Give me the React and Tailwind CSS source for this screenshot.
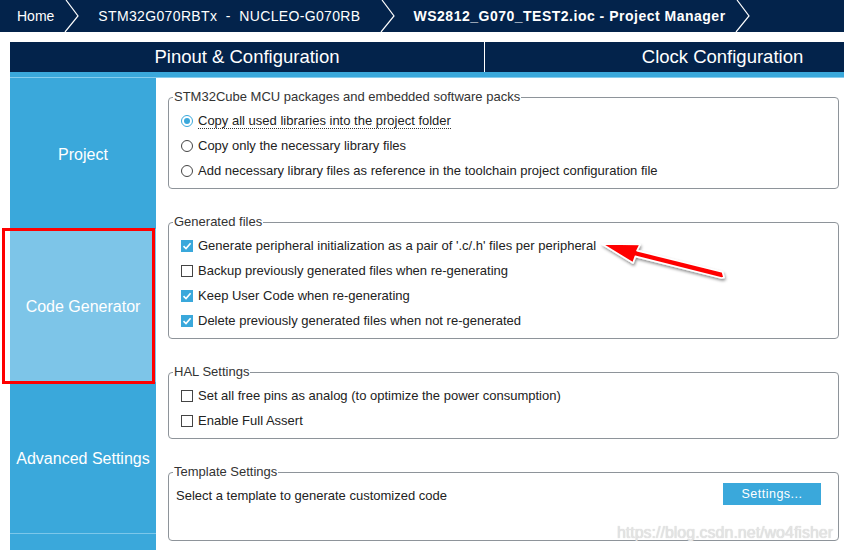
import React from 'react';

const Chevron = () => (
  <svg width="16" height="32" viewBox="0 0 16 32" className="shrink-0">
    <polyline points="2,0 14,16 1,32" fill="none" stroke="#ffffff" strokeWidth="1.2" />
  </svg>
);

const Radio = ({ on }) => (
  <svg width="12" height="12" viewBox="0 0 12 12" className="shrink-0">
    <circle cx="6" cy="6" r="5.5" fill="#fff" stroke={on ? '#3aa8db' : '#444'} strokeWidth="1" />
    {on && <circle cx="6" cy="6" r="3" fill="#3aa8db" />}
  </svg>
);

const Check = ({ on }) =>
  on ? (
    <svg width="12" height="12" viewBox="0 0 12 12" className="shrink-0">
      <rect x="0" y="0" width="12" height="12" fill="#3aa8db" />
      <polyline points="2.5,6.2 5,8.6 9.6,3.2" fill="none" stroke="#fff" strokeWidth="1.6" />
    </svg>
  ) : (
    <svg width="12" height="12" viewBox="0 0 12 12" className="shrink-0">
      <rect x="0.5" y="0.5" width="11" height="11" fill="#fff" stroke="#444" strokeWidth="1" />
    </svg>
  );

const Group = ({ title, className = '', children }) => (
  <fieldset className={`border border-[#8e949a] rounded-[4px] p-0 m-0 min-w-0 ${className}`}>
    <legend className="ml-[4px] px-[1px] text-[13px] leading-[16px] text-[#333]">{title}</legend>
    {children}
  </fieldset>
);

const Row = ({ icon, children }) => (
  <div className="h-[25px] flex items-center gap-[5px] pl-[12px] text-[13px] text-[#222]">
    {icon}
    {children}
  </div>
);

const App = () => {
  const sideItems = ['Project', 'Code Generator', 'Advanced Settings', ''];

  return (
    <div className="relative w-[844px] h-[550px] overflow-hidden bg-white font-['Liberation_Sans',Arial,sans-serif]">
      {/* breadcrumb */}
      <div className="h-8 bg-[#03234b] flex items-center text-white text-[14px] whitespace-nowrap">
        <span className="ml-[17px]">Home</span>
        <span className="ml-[10px]"><Chevron /></span>
        <span className="ml-[18px] tracking-[0.35px]">STM32G070RBTx&nbsp; - &nbsp;NUCLEO-G070RB</span>
        <span className="ml-[19px]"><Chevron /></span>
        <span className="ml-[18px] font-bold tracking-[0.5px]">WS2812_G070_TEST2.ioc - Project Manager</span>
        <span className="ml-[9px]"><Chevron /></span>
      </div>

      <div className="pl-[10px] pt-[10px]">
        {/* tabs */}
        <div className="flex h-[30px] w-[951px] bg-[#03234b] text-white text-[18.5px]">
          <div className="w-[475px] flex items-center justify-center border-r border-white">Pinout &amp; Configuration</div>
          <div className="w-[475px] flex items-center justify-center">Clock Configuration</div>
        </div>
        <div className="h-[6px] bg-[#3aa8db] border-b border-[#86cdee]" />

        <div className="flex">
          {/* sidebar */}
          <div className="w-[146px] shrink-0 bg-[#3aa8db] text-white text-[16px]">
            {sideItems.map((name) => (
              <div
                key={name || 'blank'}
                className={`relative h-[152px] flex items-center justify-center border-b border-[#7cc7ea] ${
                  name === 'Code Generator' ? 'bg-[#7dc5e8]' : ''
                }`}
              >
                <span className="mt-[2px]">{name}</span>
                {name === 'Code Generator' && (
                  <div className="absolute left-[-8px] top-[-2px] w-[153px] h-[156px] border-[3px] border-[#ff0000]" />
                )}
              </div>
            ))}
          </div>

          {/* content */}
          <div className="flex-1 pl-[12px] pr-[5px] pt-[11px]">
            <Group title="STM32Cube MCU packages and embedded software packs">
              <div className="pt-[3px] pb-[5px]">
                <Row icon={<Radio on />}>
                  <span className="border-b border-dotted border-[#333] leading-[15px]">Copy all used libraries into the project folder</span>
                </Row>
                <Row icon={<Radio />}>Copy only the necessary library files</Row>
                <Row icon={<Radio />}>Add necessary library files as reference in the toolchain project configuration file</Row>
              </div>
            </Group>

            <Group title="Generated files" className="mt-[25px]">
              <div className="pt-[3px] pb-[5px]">
                <Row icon={<Check on />}>Generate peripheral initialization as a pair of '.c/.h' files per peripheral</Row>
                <Row icon={<Check />}>Backup previously generated files when re-generating</Row>
                <Row icon={<Check on />}>Keep User Code when re-generating</Row>
                <Row icon={<Check on />}>Delete previously generated files when not re-generated</Row>
              </div>
            </Group>

            <Group title="HAL Settings" className="mt-[25px]">
              <div className="pt-[3px] pb-[5px]">
                <Row icon={<Check />}>Set all free pins as analog (to optimize the power consumption)</Row>
                <Row icon={<Check />}>Enable Full Assert</Row>
              </div>
            </Group>

            <Group title="Template Settings" className="mt-[25px]">
              <div className="h-[60px] flex items-start justify-between pl-[7px] pr-[17px] pt-[3px]">
                <span className="text-[13px] leading-[22px] mt-[2px] text-[#222]">Select a template to generate customized code</span>
                <button className="w-[98px] h-[22px] bg-[#3aa8db] text-white text-[12.5px] tracking-[0.5px]">Settings...</button>
              </div>
            </Group>
          </div>
        </div>
      </div>

      {/* red arrow annotation */}
      <svg className="absolute left-0 top-0 pointer-events-none" width="844" height="550" viewBox="0 0 844 550">
        <defs>
          <filter id="sh" x="-20%" y="-50%" width="140%" height="200%">
            <feDropShadow dx="1" dy="2" stdDeviation="1.5" floodColor="#000" floodOpacity="0.45" />
          </filter>
        </defs>
        <polygon
          points="602,244 640,244.5 637,250.6 722.5,272 724,277.5 721.5,278 635.3,256.4 633,263"
          fill="#ff0000"
          stroke="#ffffff"
          strokeWidth="1.6"
          strokeLinejoin="round"
          filter="url(#sh)"
        />
      </svg>

      {/* watermark */}
      <div className="absolute right-[11px] bottom-[5px] text-[16px] text-[#e4e4e4] [text-shadow:0_0_1px_#c8c8c8]">
        https://blog.csdn.net/wo4fisher
      </div>
    </div>
  );
};

export default App;
